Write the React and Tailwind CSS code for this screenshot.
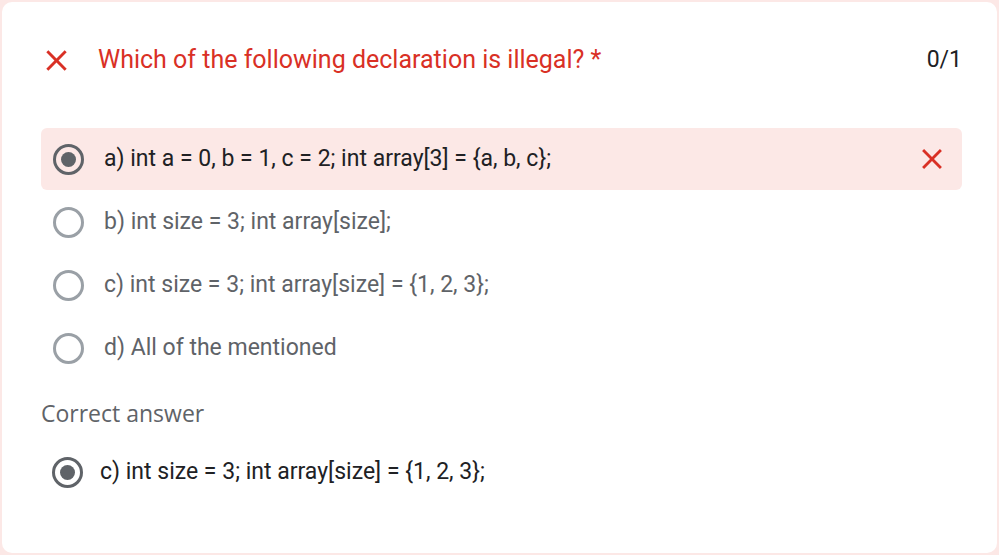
import React from "react";

const options = [
    { id: "a", label: "a) int a = 0, b = 1, c = 2; int array[3] = {a, b, c};", picked: true },
    { id: "b", label: "b) int size = 3; int array[size];" },
    { id: "c", label: "c) int size = 3; int array[size] = {1, 2, 3};" },
    { id: "d", label: "d) All of the mentioned" },
];

const Cross = ({ className }) => (
    <svg viewBox="0 0 24 24" className={className} fill="currentColor">
        <path d="M19 6.41 17.59 5 12 10.59 6.41 5 5 6.41 10.59 12 5 17.59 6.41 19 12 13.41 17.59 19 19 17.59 13.41 12z" />
    </svg>
);

const Radio = ({ checked }) => (
    <div
        className={
            checked
                ? "w-[31px] h-[31px] rounded-full border-[3px] border-[#5f6368] flex items-center justify-center shrink-0"
                : "w-[31px] h-[31px] rounded-full border-[3px] border-[#9aa0a6] shrink-0"
        }
    >
        {checked && <div className="w-[15px] h-[15px] rounded-full bg-[#5f6368]" />}
    </div>
);

const App = () => {
    return (
        <div className="w-[999px] h-[555px] bg-[#fce8e6] p-[2px] font-['Roboto',sans-serif]">
            <div className="h-full w-[995px] bg-white rounded-[10px] pt-[38px] pl-[39px] pr-[35px]">
                {/* question header */}
                <div className="flex items-center h-[40px]">
                    <Cross className="w-[35px] h-[35px] text-[#d93025] -ml-[2px]" />
                    <div className="ml-[24px] text-[25px] text-[#d93025] flex-1">
                        Which of the following declaration is illegal? *
                    </div>
                    <div className="text-[23px] text-[#202124]">0/1</div>
                </div>

                {/* options */}
                <div className="mt-[48px]">
                    {options.map((opt) => (
                        <div
                            key={opt.id}
                            className={
                                opt.picked
                                    ? "flex items-center h-[62px] pl-[12px] pr-[13px] rounded-[6px] bg-[#fce8e6]"
                                    : "flex items-center h-[63px] pl-[12px] pr-[13px] pt-[2px]"
                            }
                        >
                            <Radio checked={opt.picked} />
                            <div
                                className={
                                    opt.picked
                                        ? "ml-[20px] text-[23px] text-[#202124] flex-1"
                                        : "ml-[20px] text-[23px] text-[#5f6368] flex-1"
                                }
                            >
                                {opt.label}
                            </div>
                            {opt.picked && <Cross className="w-[34px] h-[34px] text-[#d93025]" />}
                        </div>
                    ))}
                </div>

                {/* correct answer */}
                <div className="mt-[20px] h-[28px] flex items-center text-[23px] text-[#5f6368] font-['Open_Sans',sans-serif]">
                    Correct answer
                </div>
                <div className="mt-[29px] flex items-center h-[32px] pl-[11px]">
                    <Radio checked />
                    <div className="ml-[17px] text-[23px] text-[#202124]">
                        c) int size = 3; int array[size] = {"{1, 2, 3};"}
                    </div>
                </div>
            </div>
        </div>
    );
};

export default App;
